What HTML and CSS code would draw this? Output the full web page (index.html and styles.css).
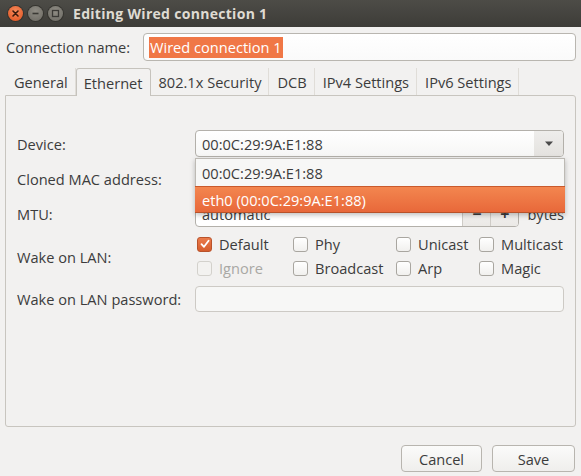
FILE: index.html
```html
<!DOCTYPE html>
<html>
<head>
<meta charset="utf-8">
<link rel="stylesheet" href="styles.css">
</head>
<body>
<div class="window">
  <div class="titlebar">
    <div class="wm-buttons">
      <span class="wm-btn close"><svg width="15" height="15" viewBox="0 0 15 15"><path d="M5 5 L10 10 M10 5 L5 10" stroke="#3a1a0c" stroke-width="1.6" stroke-linecap="round"/></svg></span>
      <span class="wm-btn"><svg width="15" height="15" viewBox="0 0 15 15"><path d="M4.5 7.5 H10.5" stroke="#3a3935" stroke-width="1.6"/></svg></span>
      <span class="wm-btn"><svg width="15" height="15" viewBox="0 0 15 15"><rect x="4.5" y="4.5" width="6" height="6" fill="none" stroke="#3a3935" stroke-width="1.3"/></svg></span>
    </div>
    <div class="title">Editing Wired connection 1</div>
  </div>

  <div class="content">
    <div class="name-row">
      <span class="label">Connection name:</span>
      <div class="entry name-entry"><span class="selected">Wired connection 1</span></div>
    </div>

    <div class="tabs">
      <div class="tab">General</div>
      <div class="tab active">Ethernet</div>
      <div class="tab">802.1x Security</div>
      <div class="tab">DCB</div>
      <div class="tab">IPv4 Settings</div>
      <div class="tab last">IPv6 Settings</div>
    </div>

    <div class="panel">
      <div class="form">
        <div class="label">Device:</div>
        <div class="field device-field">
          <div class="combo">
            <span class="combo-text">00:0C:29:9A:E1:88</span>
            <span class="combo-arrow"><svg width="10" height="6" viewBox="0 0 10 6"><path d="M1 0.5 H9 L5 5 Z" fill="#4a4a4a"/></svg></span>
          </div>
          <div class="popup">
            <div class="popup-item">00:0C:29:9A:E1:88</div>
            <div class="popup-item hl">eth0 (00:0C:29:9A:E1:88)</div>
          </div>
        </div>

        <div class="label">Cloned MAC address:</div>
        <div class="field">
          <div class="combo"><span class="combo-text"></span></div>
        </div>

        <div class="label">MTU:</div>
        <div class="field mtu">
          <div class="spin">
            <span class="spin-text">automatic</span>
            <span class="spin-btn">−</span>
            <span class="spin-btn">+</span>
          </div>
          <span class="unit">bytes</span>
        </div>

        <div class="label">Wake on LAN:</div>
        <div class="checks">
          <label class="check"><span class="box checked"><svg width="12" height="12" viewBox="0 0 12 12"><path d="M2.5 6.2 L5 8.8 L9.6 2.8" fill="none" stroke="#fff" stroke-width="1.8" stroke-linecap="round" stroke-linejoin="round"/></svg></span>Default</label>
          <label class="check"><span class="box"></span>Phy</label>
          <label class="check"><span class="box"></span>Unicast</label>
          <label class="check"><span class="box"></span>Multicast</label>
          <label class="check disabled"><span class="box"></span>Ignore</label>
          <label class="check"><span class="box"></span>Broadcast</label>
          <label class="check"><span class="box"></span>Arp</label>
          <label class="check"><span class="box"></span>Magic</label>
        </div>

        <div class="label">Wake on LAN password:</div>
        <div class="field">
          <div class="entry pw-entry"></div>
        </div>
      </div>
    </div>

    <div class="actions">
      <button class="btn cancel">Cancel</button>
      <button class="btn save">Save</button>
    </div>
  </div>
</div>
</body>
</html>
```

FILE: styles.css
```css
* { box-sizing: border-box; }
html, body {
  margin: 0;
  padding: 0;
  width: 581px;
  height: 476px;
  overflow: hidden;
  background: #f2f1f0;
  font-family: "Open Sans", "DejaVu Sans", sans-serif;
  font-size: 14.6px;
  color: #3c3c3c;
}
.window {
  width: 581px;
  height: 476px;
  display: flex;
  flex-direction: column;
}
.titlebar {
  height: 27px;
  background: linear-gradient(#4d4c47, #3d3c38);
  display: flex;
  align-items: center;
  padding-left: 8px;
  flex: none;
}
.wm-buttons {
  display: flex;
  gap: 5px;
}
.wm-btn {
  width: 15px;
  height: 15px;
  border-radius: 50%;
  background: radial-gradient(circle at 50% 35%, #8f8c84, #6b6962);
  box-shadow: 0 0 0 1px #35342f;
  display: flex;
}
.wm-btn.close {
  background: radial-gradient(circle at 50% 35%, #f58a5c, #e0501c);
}
.title {
  margin-left: 10px;
  font-weight: bold;
  font-size: 14px;
  color: #dfdbd2;
  letter-spacing: 0.3px;
}
.content {
  flex: 1;
  display: flex;
  flex-direction: column;
  padding: 6px 5px 5px 5px;
}
.name-row {
  display: flex;
  align-items: center;
  height: 28px;
}
.name-row .label {
  width: 138px;
  padding-left: 1px;
}
.entry {
  height: 28px;
  border: 1px solid #b9b6b0;
  border-radius: 4px;
  background: linear-gradient(#ffffff, #fafafa);
  display: flex;
  align-items: center;
}
.name-entry {
  flex: 1;
  padding-left: 5px;
}
.selected {
  background: #f07746;
  color: #ffffff;
  padding: 1px 1px;
  line-height: 19px;
}
.tabs {
  display: flex;
  margin-top: 7px;
  height: 27px;
  align-items: stretch;
  padding-left: 1px;
}
.tab {
  padding: 0 7px 0 8px;
  display: flex;
  align-items: center;
  border-right: 1px solid #e0ddd8;
  color: #3c3c3c;
}
.tab.active {
  border: 1px solid #c6c3bd;
  border-bottom: none;
  border-radius: 3px 3px 0 0;
  background: #f2f1f0;
  margin-bottom: -1px;
  z-index: 1;
  padding: 0 7px;
}
.panel {
  height: 332px;
  border: 1px solid #c8c5bf;
  border-radius: 0 3px 3px 3px;
  padding: 34px 11px 0 11px;
}
.form {
  display: grid;
  grid-template-columns: 178px 369px;
  grid-template-rows: 27px 27px 27px 43px 26px;
  row-gap: 8px;
  align-items: center;
}
.field {
  position: relative;
  height: 100%;
  display: flex;
  align-items: center;
}
.combo {
  width: 100%;
  height: 27px;
  border: 1px solid #b3b0aa;
  border-radius: 4px;
  background: linear-gradient(#ffffff, #f6f6f5);
  display: flex;
  align-items: center;
  overflow: hidden;
}
.combo-text {
  flex: 1;
  padding-left: 6px;
}
.combo-arrow {
  width: 29px;
  height: 100%;
  background: linear-gradient(#eeedeb, #e4e2df);
  display: flex;
  align-items: center;
  justify-content: center;
}
.popup {
  position: absolute;
  left: 0;
  top: 28px;
  width: 370px;
  background: #f7f7f6;
  border: 1px solid #bdbab4;
  box-shadow: 0 2px 5px rgba(0,0,0,0.25);
  z-index: 5;
}
.popup-item {
  height: 27px;
  display: flex;
  align-items: center;
  padding-left: 6px;
}
.popup-item.hl {
  background: linear-gradient(#f3864f, #e8683a);
  border-top: 1px solid #c95a2c;
  border-bottom: 1px solid #b8522a;
  color: #ffffff;
  margin: 0 -1px -1px -1px;
  padding-left: 7px;
}
.mtu { gap: 8px; }
.spin {
  width: 325px;
  height: 27px;
  border: 1px solid #b3b0aa;
  border-radius: 4px;
  background: #ffffff;
  display: flex;
  align-items: stretch;
  overflow: hidden;
}
.spin-text {
  flex: 1;
  padding-left: 6px;
  display: flex;
  align-items: center;
}
.spin-btn {
  width: 28px;
  border-left: 1px solid #cfccc7;
  background: linear-gradient(#f6f6f5, #ebe9e6);
  display: flex;
  align-items: center;
  justify-content: center;
  font-weight: bold;
  font-size: 16px;
}
.checks {
  display: grid;
  grid-template-columns: 96px 103px 83px 86px;
  grid-template-rows: 18px 20px;
  row-gap: 5px;
  margin-left: 2px;
}
.check {
  display: flex;
  align-items: center;
  gap: 7px;
  white-space: nowrap;
}
.box {
  width: 15px;
  height: 15px;
  border: 1px solid #a9a6a0;
  border-radius: 3px;
  background: linear-gradient(#ffffff, #f1f0ee);
  display: flex;
  align-items: center;
  justify-content: center;
  flex: none;
}
.box.checked {
  background: linear-gradient(#ea7b4b, #d65d2c);
  border-color: #b9532b;
}
.check.disabled { color: #a9a8a4; }
.check.disabled .box { border-color: #d3d1cc; background: #f3f2f0; }
.pw-entry {
  width: 100%;
  height: 26px;
  background: #f7f7f6;
  border-color: #cdcac5;
}
.actions {
  display: flex;
  justify-content: flex-end;
  gap: 10px;
  margin-top: 18px;
  padding-right: 1px;
}
.btn {
  height: 27px;
  font-family: inherit;
  font-size: 14.6px;
  color: #3c3c3c;
  border: 1px solid #b8b5af;
  border-radius: 4px;
  background: linear-gradient(#fbfbfa, #efeeec);
  padding: 0;
}
.cancel { width: 81px; }
.save { width: 83px; }
```
